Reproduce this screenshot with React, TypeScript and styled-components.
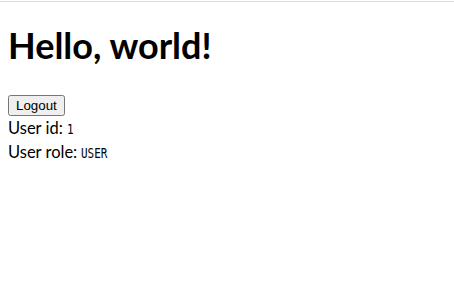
import React from 'react'
import styled, {createGlobalStyle} from "styled-components"

const GlobalStyle = createGlobalStyle`
    html, body {
        margin: 0;
        background: #fff;
    }
    body {
        font-family: 'Lato', sans-serif;
        color: #000;
    }
`

function App() {
    return (
        <Main>
            <GlobalStyle/>
            <TopRule/>
            <Content>
                <Heading>Hello, world!</Heading>
                <LogoutButton>Logout</LogoutButton>
                <Info>
                    <InfoLine>User id: <Value>1</Value></InfoLine>
                    <InfoLine>User role: <Value>USER</Value></InfoLine>
                </Info>
            </Content>
        </Main>
    )
}

export default App

const Main = styled.div`
    min-height: 100vh;
`

const TopRule = styled.div`
    height: 1px;
    border-bottom: 1px solid #dcdcdc;
`

const Content = styled.div`
    padding: 0 8px;
`

const Heading = styled.h1`
    font-family: 'Lato', sans-serif;
    font-size: 36px;
    font-weight: bold;
    line-height: 43px;
    margin: 22px 0 28px;
`

const LogoutButton = styled.button`
    display: block;
    font-family: 'Liberation Sans', sans-serif;
    font-size: 13.33px;
    height: 21px;
    padding: 1px 6px;
`

const Info = styled.div`
    padding-top: 1px;
`

const InfoLine = styled.div`
    font-family: 'Lato', sans-serif;
    font-size: 16.5px;
    line-height: 23px;
`

const Value = styled.code`
    display: inline-block;
    font-family: 'DejaVu Sans Mono', monospace;
    font-size: 14px;
    transform: scaleX(0.78);
    transform-origin: left center;
`
